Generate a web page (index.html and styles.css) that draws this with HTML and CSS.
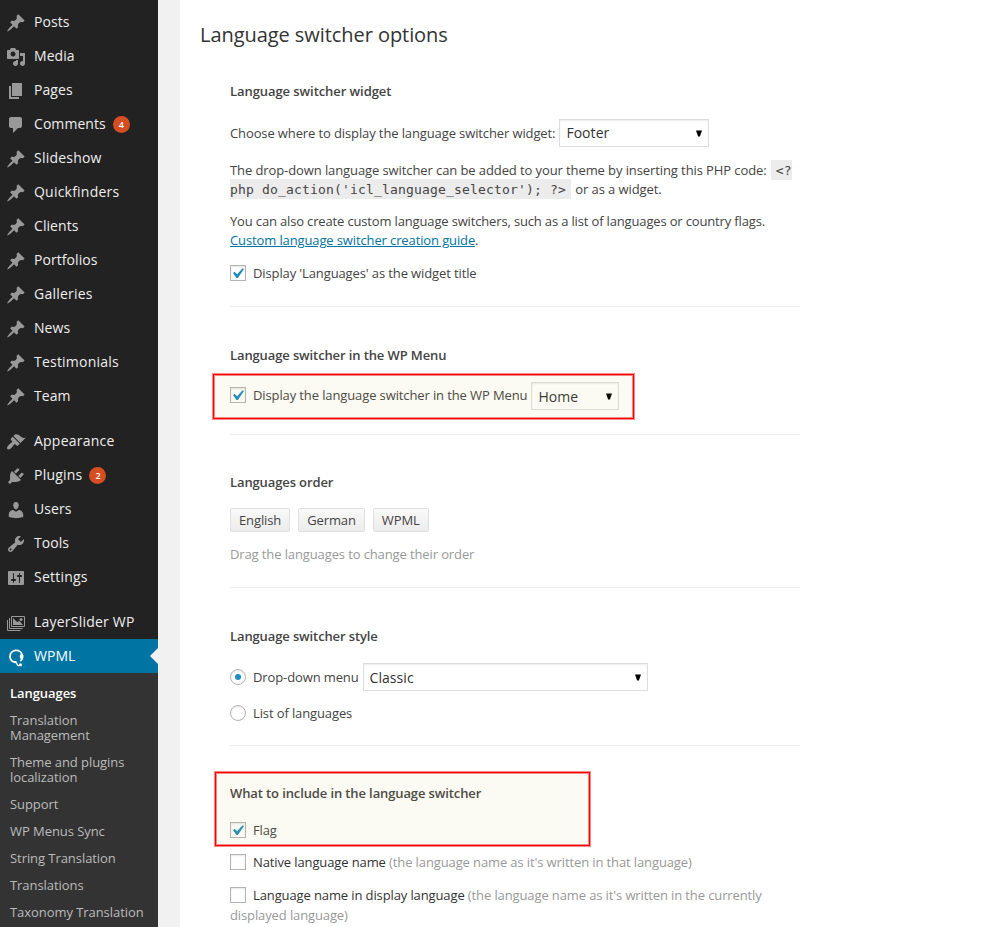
FILE: index.html
```html
<!DOCTYPE html>
<html lang="en">
<head>
<meta charset="utf-8">
<title>Languages</title>
<link rel="stylesheet" href="styles.css">
</head>
<body>
<svg class="defs" width="0" height="0">
  <symbol id="pin" viewBox="0 0 20 20"><path d="M10.44 3.02l1.82-1.82 6.36 6.35-1.83 1.82c-1.05-.68-2.48-.57-3.41.36l-.75.75c-.92.93-1.04 2.35-.35 3.41l-1.83 1.82-2.41-2.41-2.8 2.79c-.42.42-3.38 2.71-3.8 2.29s1.86-3.39 2.28-3.81l2.79-2.79L4.1 9.36l1.83-1.82c1.05.69 2.48.57 3.4-.36l.75-.75c.93-.92 1.05-2.35.36-3.41z"/></symbol>
  <symbol id="media" viewBox="0 0 20 20"><path d="M13 11V4c0-.55-.45-1-1-1h-1.67L9 1H5L3.67 3H2c-.55 0-1 .45-1 1v7c0 .55.45 1 1 1h10c.55 0 1-.45 1-1zM7 4.5c1.38 0 2.5 1.12 2.5 2.5S8.38 9.5 7 9.5 4.5 8.38 4.5 7 5.62 4.5 7 4.5zM14 6h5v10.5c0 1.38-1.12 2.5-2.5 2.5S14 17.88 14 16.5s1.12-2.5 2.5-2.5c.17 0 .34.02.5.05V9h-3V6zm-4 8.05V13h2v3.5c0 1.38-1.12 2.5-2.5 2.5S7 17.88 7 16.5 8.12 14 9.5 14c.17 0 .34.02.5.05z"/></symbol>
  <symbol id="pages" viewBox="0 0 20 20"><path d="M6 15V2h10v13H6zm-1 1h8v2H3V5h2v11z"/></symbol>
  <symbol id="comments" viewBox="0 0 20 20"><path d="M5 2h9c1.1 0 2 .9 2 2v7c0 1.1-.9 2-2 2h-2l-5 5v-5H5c-1.1 0-2-.9-2-2V4c0-1.1.9-2 2-2z"/></symbol>
  <symbol id="appearance" viewBox="0 0 20 20"><path d="M14.48 11.06L7.41 3.99l1.5-1.5c.5-.56 2.3-.47 3.51.32 1.21.8 1.43 1.28 2.91 2.1 1.18.64 2.45 1.26 4.45.85zm-.71.71L6.7 4.7 4.93 6.47c-.39.39-.39 1.02 0 1.41l1.06 1.06c.39.39.39 1.03 0 1.42-.6.6-1.43 1.11-2.21 1.69-.35.26-.7.53-1.01.84C1.43 14.23.4 16.08 1.4 17.07c.99 1 2.84-.03 4.18-1.36.31-.31.58-.66.85-1.02.57-.78 1.08-1.61 1.69-2.21.39-.39 1.02-.39 1.41 0l1.06 1.06c.39.39 1.02.39 1.41 0z"/></symbol>
  <symbol id="plugins" viewBox="0 0 20 20"><path d="M13.11 4.36L9.87 7.6 8 5.73l3.24-3.24c.35-.34 1.05-.2 1.56.32.52.51.66 1.21.31 1.55zm-8 1.77l.91-1.12 9.01 9.01-1.19.84c-.71.71-2.63 1.16-3.82 1.16H6.14L4.9 17.26c-.59.59-1.54.59-2.12 0-.59-.58-.59-1.53 0-2.12l1.24-1.24v-3.88c0-1.13.4-3.19 1.09-3.89zm7.26 3.97l3.24-3.24c.34-.35 1.04-.21 1.55.31.52.51.66 1.21.31 1.55l-3.24 3.25z"/></symbol>
  <symbol id="users" viewBox="0 0 20 20"><path d="M10 9.25c-2.27 0-2.73-3.44-2.73-3.44C7 4.02 7.82 2 9.97 2c2.16 0 2.98 2.02 2.71 3.81 0 0-.41 3.44-2.68 3.44zm0 2.57L12.72 10c2.39 0 4.52 2.33 4.52 4.53v2.49s-3.65 1.13-7.24 1.13c-3.65 0-7.24-1.13-7.24-1.13v-2.49c0-2.25 1.94-4.48 4.47-4.48z"/></symbol>
  <symbol id="tools" viewBox="0 0 20 20"><path d="M16.68 9.77c-1.34 1.34-3.3 1.67-4.95.99l-5.41 6.52c-.99.99-2.59.99-3.58 0s-.99-2.59 0-3.57l6.52-5.42c-.68-1.65-.35-3.61.99-4.95 1.28-1.28 3.12-1.62 4.72-1.06l-2.89 2.89 2.82 2.82 2.86-2.87c.53 1.58.18 3.39-1.08 4.65zM3.81 16.21c.4.39 1.04.39 1.43 0 .4-.4.4-1.04 0-1.43-.39-.4-1.03-.4-1.43 0-.39.39-.39 1.03 0 1.43z"/></symbol>
  <symbol id="settings" viewBox="0 0 20 20"><path d="M18 16V4c0-.55-.45-1-1-1H3c-.55 0-1 .45-1 1v12c0 .55.45 1 1 1h14c.55 0 1-.45 1-1zM8 11h1c.55 0 1 .45 1 1s-.45 1-1 1H8v1.5c0 .28-.22.5-.5.5s-.5-.22-.5-.5V13H6c-.55 0-1-.45-1-1s.45-1 1-1h1V5.5c0-.28.22-.5.5-.5s.5.22.5.5V11zm5-2h-1c-.55 0-1-.45-1-1s.45-1 1-1h1V5.5c0-.28.22-.5.5-.5s.5.22.5.5V7h1c.55 0 1 .45 1 1s-.45 1-1 1h-1v5.5c0 .28-.22.5-.5.5s-.5-.22-.5-.5V9z"/></symbol>
  <symbol id="layers" viewBox="0 0 20 20"><g fill="none" stroke="currentColor"><path d="M5.5 3.5h13v10h-13z"/><path d="M3.500 5v10.500h13"/><path d="M1.500 7v10.500h13"/></g><path d="M7 12V5l4 4 2.500-1 3.500 4z"/><circle cx="15" cy="6.500" r="1.500"/></symbol>
  <symbol id="wpml" viewBox="0 0 20 20"><path d="M10.500 15C6 15.500 4 12.500 4 9.500a6.200 6.200 0 0 1 12.300-1" fill="none" stroke="currentColor" stroke-width="1.900"/><path d="M14.300 7.500c1-1 3-.8 3.200 1 .3 2.800-.8 5.300-3 6l-.8-.7c1-.8 1-1.800.6-2.800-.7-1-.8-2.500 0-3.500z"/><path d="M7 14.500c2 .3 3.500.8 4 2.500.3 1.300 1.300 2 2.700 1.300" fill="none" stroke="currentColor" stroke-width="1.300"/><circle cx="14.500" cy="17.800" r="1.500"/></symbol>
  <symbol id="check" viewBox="0 0 20 20"><path d="M14.830 4.890l1.340.94-5.810 8.380H9.020L5.780 9.670l1.340-1.250 2.570 2.400z"/></symbol>
  <symbol id="arrow" viewBox="0 0 6 7"><path d="M0 .5h6L3.900 6.500H2.100z"/></symbol>
</svg>
<div class="page">
  <nav class="sidebar">
    <a class="item"><svg><use href="#pin"/></svg>Posts</a>
    <a class="item"><svg><use href="#media"/></svg>Media</a>
    <a class="item"><svg><use href="#pages"/></svg>Pages</a>
    <a class="item"><svg><use href="#comments"/></svg>Comments<span class="count">4</span></a>
    <a class="item wide"><svg><use href="#pin"/></svg>Slideshow</a>
    <a class="item wide"><svg><use href="#pin"/></svg>Quickfinders</a>
    <a class="item"><svg><use href="#pin"/></svg>Clients</a>
    <a class="item"><svg><use href="#pin"/></svg>Portfolios</a>
    <a class="item wide"><svg><use href="#pin"/></svg>Galleries</a>
    <a class="item"><svg><use href="#pin"/></svg>News</a>
    <a class="item wide"><svg><use href="#pin"/></svg>Testimonials</a>
    <a class="item"><svg><use href="#pin"/></svg>Team</a>
    <a class="item group wide"><svg><use href="#appearance"/></svg>Appearance</a>
    <a class="item wide"><svg><use href="#plugins"/></svg>Plugins<span class="count">2</span></a>
    <a class="item"><svg><use href="#users"/></svg>Users</a>
    <a class="item"><svg><use href="#tools"/></svg>Tools</a>
    <a class="item wide"><svg><use href="#settings"/></svg>Settings</a>
    <a class="item group wide"><svg><use href="#layers"/></svg>LayerSlider WP</a>
    <a class="item current"><svg><use href="#wpml"/></svg>WPML</a>
    <div class="submenu">
      <a class="active">Languages</a>
      <a>Translation Management</a>
      <a>Theme and plugins localization</a>
      <a>Support</a>
      <a>WP Menus Sync</a>
      <a>String Translation</a>
      <a>Translations</a>
      <a>Taxonomy Translation</a>
    </div>
  </nav>
  <main class="panel">
    <h2>Language switcher options</h2>
    <section class="widget">
      <h3>Language switcher widget</h3>
      <div class="row tall"><span class="text">Choose where to display the language switcher widget:</span><span class="select footer-select">Footer<svg><use href="#arrow"/></svg></span></div>
      <p class="code-note">The drop-down language switcher can be added to your theme by inserting this PHP code: <code>&lt;?<br>php do_action('icl_language_selector'); ?&gt;</code> or as a widget.</p>
      <p class="guide">You can also create custom language switchers, such as a list of languages or country flags. <a class="link">Custom language switcher creation guide</a>.</p>
      <div class="row after-guide"><span class="box"><svg><use href="#check"/></svg></span><span class="text">Display 'Languages' as the widget title</span></div>
    </section>
    <section class="wp-menu">
      <h3>Language switcher in the WP Menu</h3>
      <div class="row tall"><span class="box"><svg><use href="#check"/></svg></span><span>Display the language switcher in the WP Menu</span><span class="select home-select"><span class="text">Home</span><svg><use href="#arrow"/></svg></span></div>
      <div class="highlight highlight-menu"></div>
    </section>
    <section class="order">
      <h3>Languages order</h3>
      <div class="langs"><span class="lang">English</span><span class="lang">German</span><span class="lang">WPML</span></div>
      <div class="row muted"><span class="text">Drag the languages to change their order</span></div>
    </section>
    <section class="style">
      <h3>Language switcher style</h3>
      <div class="row tall"><span class="box radio on"></span><span class="text">Drop-down menu</span><span class="select style-select"><span class="text">Classic</span><svg><use href="#arrow"/></svg></span></div>
      <div class="row"><span class="box radio"></span><span class="text">List of languages</span></div>
    </section>
    <section class="include">
      <h3>What to include in the language switcher</h3>
      <div class="row flag"><span class="box"><svg><use href="#check"/></svg></span><span class="text">Flag</span></div>
      <div class="row"><span class="box"></span><span class="name text">Native language name <span class="muted">(the language name as it's written in that language)</span></span></div>
      <p class="wrap"><span class="box"></span><span class="name">Language name in display language</span> <span class="muted">(the language name as it's written in the currently</span><br><span class="muted">displayed language)</span></p>
      <div class="highlight highlight-include"></div>
    </section>
  </main>
</div>
</body>
</html>
```
FILE: styles.css
```css
* { box-sizing: border-box; }
html, body { margin: 0; height: 927px; overflow: hidden; }
body { background: #f1f1f1; color: #444; font: 13px/19.5px "Open Sans", sans-serif; }
h2, h3, p { margin: 0; }
.defs { position: absolute; }
.page { display: flex; gap: 22px; height: 927px; }

.sidebar { width: 158px; flex: none; padding-top: 5px; background: #222; overflow: hidden; }
.item { display: flex; align-items: center; height: 34px; padding-left: 6px; color: #eee; font-size: 14px; letter-spacing: .06px; line-height: 18px; position: relative; }
.wide { letter-spacing: .22px; }
.item > svg { width: 20px; height: 20px; margin: 2px 8px 0 0; fill: #999; color: #999; }
.group { margin-top: 11px; }
.count { width: 17px; height: 17px; margin: 1px 0 0 7px; border-radius: 50%; background: #d54e21; color: #fff; font-size: 9px; font-weight: 600; letter-spacing: 0; line-height: 17px; text-align: center; }
.current { background: #0074a2; color: #fff; }
.current > svg { fill: #fff; color: #fff; }
.current::after { content: ""; position: absolute; right: 0; top: 9px; border: 8px solid transparent; border-left: 0; border-right-color: #f1f1f1; }
.submenu { height: 254px; padding: 7px 0; background: #333; letter-spacing: -.06px; }
.submenu a { display: block; padding: 6px 10px; color: #bbb; line-height: 15px; }
.submenu .active { color: #fff; font-weight: 600; }

.panel { flex: 1; padding: 23px 0 0 20px; background: #fff; letter-spacing: -.115px; }
h2 { color: #333; font-size: 20px; font-weight: 400; letter-spacing: -.06px; line-height: 24px; }
section { position: relative; width: 570px; margin-left: 30px; border-bottom: 1px solid #eee; }
h3 { font-size: 13px; font-weight: 600; line-height: 20px; }
.row { display: flex; align-items: center; height: 20px; white-space: nowrap; }
.text { padding-top: 2px; }
.tall { height: 28px; }
.widget { padding: 34px 0 23px; }
.widget h3 { letter-spacing: -.07px; }
.widget .tall { margin-top: 18px; }
.code-note, .guide { line-height: 19px; }
.code-note { margin-top: 14px; letter-spacing: -.095px; white-space: nowrap; }
.guide { margin-top: 13px; letter-spacing: -.155px; }
.after-guide { margin-top: 13px; }
code { padding: 3px 5px 2px; margin: 0 1px; background: #ececec; font: 13px/15px "DejaVu Sans Mono", monospace; letter-spacing: .174px; }
.link { color: #0074a2; letter-spacing: -.12px; text-decoration: underline; }

.select { display: flex; align-items: center; justify-content: space-between; height: 28px; margin-left: 4px; padding: 0 6px; border: 1px solid #ddd; background: #fff; box-shadow: inset 0 1px 2px rgba(0,0,0,.07); color: #333; font-size: 14px; letter-spacing: .05px; }
.select svg { width: 6px; height: 7px; fill: #000; }
.footer-select { width: 150px; }
.home-select { width: 88px; }
.style-select { width: 285px; }

.box { display: inline-flex; flex: none; width: 16px; height: 16px; margin-right: 7px; border: 1px solid #b4b4b4; background: #fff; box-shadow: inset 0 1px 2px rgba(0,0,0,.1); }
.box svg { width: 21px; height: 21px; flex: none; margin: -3px 0 0 -4px; fill: #1e8cbe; }
.radio { align-items: center; justify-content: center; border-radius: 50%; }
.on::after { content: ""; width: 6px; height: 6px; border-radius: 50%; background: #1e8cbe; }

.wp-menu { padding: 38px 0 24px; }
.wp-menu .tall { margin-top: 17px; }
.wp-menu .box { margin-bottom: 2px; }
.order { padding: 37px 0 23px; }
.langs { display: flex; gap: 8px; margin: 16px 0 12px; }
.lang { height: 24px; padding: 0 8px; border: 1px solid #dfdfdf; border-radius: 2px; background: linear-gradient(#f9f9f9, #ececec); line-height: 22px; }
.muted { color: #999; }
.style { padding: 38px 0 22px; }
.style .tall { margin: 17px 0 12px; }
.include { padding-top: 37px; border: 0; }
.flag { margin: 17px 0 12px; }
.name { color: #333; }
.wrap { margin-top: 13px; line-height: 20px; white-space: nowrap; }
.wrap .box { vertical-align: -3px; }

.highlight { position: absolute; border: 1px solid #f00; background: rgba(200,190,80,.07); box-shadow: 0 0 0 1px rgba(240,40,40,.55), inset 0 0 0 1px rgba(240,40,40,.55); }
.highlight-menu { left: -17px; top: 67px; width: 421px; height: 45px; }
.highlight-include { left: -15px; top: 26px; width: 375px; height: 74px; }
```
